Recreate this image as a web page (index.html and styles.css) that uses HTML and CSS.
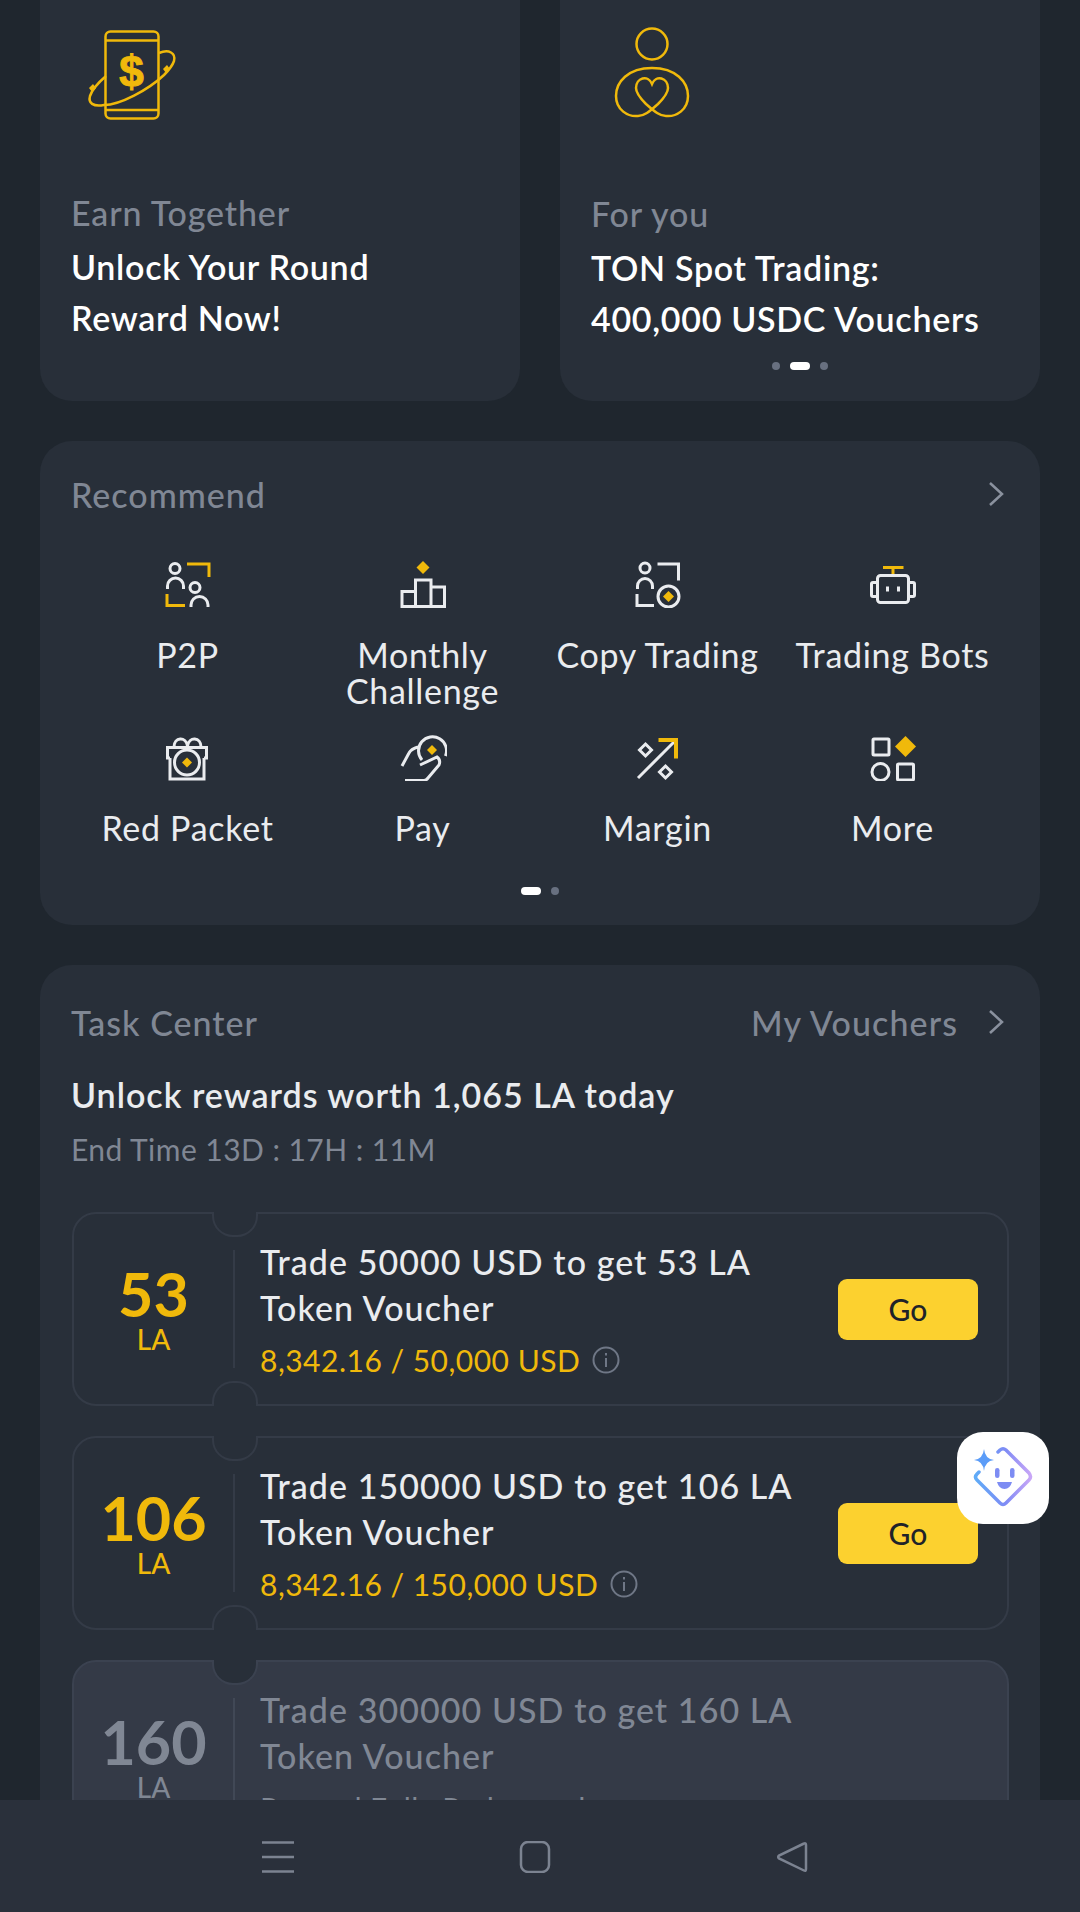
FILE: index.html
```html
<!DOCTYPE html>
<html lang="en">
<head>
<meta charset="utf-8">
<title>Rewards</title>
<link rel="stylesheet" href="styles.css">
</head>
<body>
<div class="screen">
  <main class="scroll">
    <section class="promos">
      <article class="card promo">
        <svg class="promo-icon phone" viewBox="0 0 100 100" width="100" height="100" fill="none" stroke="#f0b90b" stroke-width="2.500">
          <rect x="21.500" y="6.500" width="53" height="87" rx="5"/>
          <path d="M21.500 15.500H74.500M21.500 85H74.500"/>
          <path d="M75 28C85 24 92 28 90 36C88 42 84 46 80 50C64 65 36 80 20 80C9 82 4 78 6 71C8 65 15 57 22 51"/>
          <path d="M83 40l3 4-4 4-3-4zM9 59l3 4-4 4-3-4z" fill="#f0b90b" stroke="none"/>
          <text x="47.500" y="62" class="dollar" text-anchor="middle">$</text>
        </svg>
        <p class="promo-label">Earn Together</p>
        <p class="promo-title">Unlock Your Round<br>Reward Now!</p>
      </article>
      <article class="card promo promo-right">
        <svg class="promo-icon person" viewBox="0 0 84 104" width="84" height="104" fill="none" stroke="#f0b90b" stroke-width="2.500">
          <circle cx="42" cy="24" r="15.500"/>
          <path d="M42 48C66 48 78 62 78 76C78 90 66 97 56 96C50 96 45 92 36 84C30 78 26 72 26 68C26 58 38 54 42 64C46 54 58 58 58 68C58 72 54 78 48 84C39 92 34 96 28 96C18 97 6 90 6 76C6 62 18 48 42 48Z"/>
        </svg>
        <p class="promo-label">For you</p>
        <p class="promo-title">TON Spot Trading:<br>400,000 USDC Vouchers</p>
        <div class="dots promo-dots"><i></i><b></b><i></i></div>
      </article>
    </section>

    <section class="card recommend">
      <header class="head">
        <h2 class="head-title">Recommend</h2>
        <svg class="chev" viewBox="0 0 16 28" width="16" height="28"><path d="M2 3l12 11L2 25"/></svg>
      </header>
      <div class="grid">
        <a class="tile">
          <svg class="ico" viewBox="0 0 48 48"><circle cx="11" cy="8.500" r="5"/><path d="M3.500 29v-3a8 8 0 0 1 16 0v3"/><path class="y" d="M23 4H45V17M3 34V45.500H21"/><circle cx="31" cy="27.500" r="5"/><path d="M27 47v-2a8.500 8.500 0 0 1 17 0v2"/></svg>
          <span>P2P</span>
        </a>
        <a class="tile">
          <svg class="ico" viewBox="0 0 48 48"><path class="yf" d="M24 1l6.500 6.500L24 14l-6.500-6.500z"/><path d="M16.500 31.500H3V46.500H45.500V27H32M16.500 46.500V20H32V46.500"/></svg>
          <span>Monthly<br>Challenge</span>
        </a>
        <a class="tile">
          <svg class="ico" viewBox="0 0 48 48"><circle cx="11" cy="8" r="5"/><path d="M3.500 29v-3a7.500 7.500 0 0 1 15 0v3M23.500 4H44.500V20.500M3 34V45.500H20"/><circle cx="34.500" cy="36.500" r="10.500"/><path class="yf" d="M34.500 31l5.500 5.500-5.500 5.500-5.500-5.500z"/></svg>
          <span>Copy Trading</span>
        </a>
        <a class="tile">
          <svg class="ico" viewBox="0 0 48 48"><path class="y" d="M14 7.500H34.500M24 7.500V14.500"/><rect x="8.500" y="15.500" width="31" height="27" rx="3"/><path d="M8 22.500H4A1.500 1.500 0 0 0 2.500 24V35A1.500 1.500 0 0 0 4 36.500H8M40 22.500H44A1.500 1.500 0 0 1 45.500 24V35A1.500 1.500 0 0 1 44 36.500H40M18.500 26.500V31.500M29.500 26.500V31.500"/></svg>
          <span>Trading Bots</span>
        </a>
        <a class="tile">
          <svg class="ico" viewBox="0 0 48 48"><path d="M6 25H3.500V14.500H42.500V25H40M6 25V46H40V25"/><path d="M10 14C10 4 22 3 23.500 13C25 3 37 4 37 14"/><circle cx="23" cy="29.500" r="12.500"/><path class="yf" d="M23 24.500l5 5-5 5-5-5z"/></svg>
          <span>Red Packet</span>
        </a>
        <a class="tile">
          <svg class="ico" viewBox="0 0 48 48"><path d="M46.500 23A14 14 0 1 0 23 27M3 33L10 20Q12 16 19 14M6 47.500H25Q27 47.500 29 45L40 32Q42 27 38 24L21 32"/><path class="yf" d="M33 12l5 5-5 5-5-5z"/></svg>
          <span>Pay</span>
        </a>
        <a class="tile">
          <svg class="ico" viewBox="0 0 48 48"><path d="M4 45L41 8"/><path class="y wide" d="M24.500 7H42V25.500"/><path d="M11.500 11l6 6-6 6-6-6zM31.500 33l6 6-6 6-6-6z"/></svg>
          <span>Margin</span>
        </a>
        <a class="tile">
          <svg class="ico" viewBox="0 0 48 48"><rect x="4" y="6" width="16" height="16" rx="1"/><path class="yf" d="M36.500 3L47 13.500 36.500 24 26 13.500z"/><circle cx="11.500" cy="39" r="8.500"/><rect x="28.500" y="31" width="16" height="16" rx="1"/></svg>
          <span>More</span>
        </a>
      </div>
      <div class="dots grid-dots"><b></b><i></i></div>
    </section>

    <section class="card tasks">
      <header class="head">
        <h2 class="head-title">Task Center</h2>
        <div class="head-link"><span>My Vouchers</span><svg class="chev" viewBox="0 0 16 28" width="16" height="28"><path d="M2 3l12 11L2 25"/></svg></div>
      </header>
      <p class="tasks-sub">Unlock rewards worth 1,065 LA today</p>
      <p class="tasks-end">End Time 13D : 17H : 11M</p>

      <div class="ticket">
        <div class="amount"><strong>53</strong><span>LA</span></div>
        <div class="detail">
          <h3>Trade 50000 USD to get 53 LA<br>Token Voucher</h3>
          <p class="progress">8,342.16 / 50,000 USD<svg class="info" viewBox="0 0 28 28" width="28" height="28"><circle cx="14" cy="14" r="12.500"/><path d="M14 12V21M14 7V9.500"/></svg></p>
        </div>
        <button class="go">Go</button>
      </div>

      <div class="ticket">
        <div class="amount"><strong>106</strong><span>LA</span></div>
        <div class="detail">
          <h3>Trade 150000 USD to get 106 LA<br>Token Voucher</h3>
          <p class="progress">8,342.16 / 150,000 USD<svg class="info" viewBox="0 0 28 28" width="28" height="28"><circle cx="14" cy="14" r="12.500"/><path d="M14 12V21M14 7V9.500"/></svg></p>
        </div>
        <button class="go">Go</button>
      </div>

      <div class="ticket is-done">
        <div class="amount"><strong>160</strong><span>LA</span></div>
        <div class="detail">
          <h3>Trade 300000 USD to get 160 LA<br>Token Voucher</h3>
          <p class="progress">Reward Fully Redeemed</p>
        </div>
      </div>
    </section>
  </main>

  <nav class="sysnav">
    <svg viewBox="0 0 32 32" width="32" height="32"><path d="M0 1.500H32M0 16H32M0 30.500H32"/></svg>
    <svg viewBox="0 0 32 32" width="32" height="32"><rect x="2" y="1" width="28" height="30" rx="7"/></svg>
    <svg viewBox="0 0 32 32" width="32" height="32"><path d="M28 2.500Q30 1.500 30 4V28Q30 30.500 28 29.500L3 17.500Q1.500 16 3 14.500Z"/></svg>
  </nav>

  <button class="assist" aria-label="Assistant">
    <svg viewBox="3 2 92 92" width="92" height="92">
      <defs><linearGradient id="ag" x1="0" y1="0" x2="1" y2="0"><stop offset="0" stop-color="#5fabf7"/><stop offset=".55" stop-color="#7f8bf5"/><stop offset="1" stop-color="#c8a6f7"/></linearGradient></defs>
      <path d="M44 22L46 20Q49 17.500 52 20L75 43Q78 47 75 50L52 73Q49 76 46 73L23 50Q20 47 23 44L25 42" fill="none" stroke="url(#ag)" stroke-width="3.500" stroke-linecap="round"/>
      <path d="M30 19Q31 29 40 30Q31 31 30 41Q29 31 20 30Q29 29 30 19Z" fill="#5b9cf8"/>
      <rect x="41" y="38" width="4.500" height="10" rx="2.250" fill="#7d8cf3"/>
      <rect x="56" y="38" width="4.500" height="10" rx="2.250" fill="#7d8cf3"/>
      <path d="M43 52H58Q56 59 50.500 59Q45 59 43 52Z" fill="#7d8cf3"/>
    </svg>
  </button>
</div>
</body>
</html>
```

FILE: styles.css
```css
* { box-sizing: border-box; }
html, body { margin: 0; padding: 0; }
body {
  width: 1080px;
  height: 1912px;
  overflow: hidden;
  background: #1f262e;
  font-family: "Lato", "Liberation Sans", sans-serif;
  color: #eaecef;
}
p, h2, h3 { margin: 0; font-weight: 500; }
.screen { position: relative; height: 1912px; display: flex; flex-direction: column; }
.scroll { flex: 1; min-height: 0; overflow: hidden; padding: 0 40px; display: flex; flex-direction: column; gap: 40px; }
.card { background: #282f39; border-radius: 32px; flex: none; }

.promos { display: grid; grid-template-columns: 480px 480px; gap: 40px; margin-top: -40px; flex: none; }
.promo { position: relative; height: 441px; padding: 65px 31px 0; }
.promo-icon { display: block; }
.phone { margin-left: 13px; }
.person { margin: -5px 0 0 19px; }
.dollar { font: 700 44px "Liberation Sans", sans-serif; fill: #f0b90b; stroke: #f0b90b; stroke-width: 1; }
.promo-label { margin-top: 66px; font-size: 34px; letter-spacing: .85px; line-height: 44px; color: #808794; }
.promo-right .promo-label { margin-top: 68px; }
.promo-title { margin-top: 6px; font-size: 34px; letter-spacing: .7px; line-height: 51px; font-weight: 600; color: #fff; }

.dots { display: flex; justify-content: center; align-items: center; gap: 10px; }
.dots i { width: 8px; height: 8px; border-radius: 50%; background: #687080; }
.dots b { width: 20px; height: 8px; border-radius: 4px; background: #fff; }
.promo-dots { position: absolute; left: 0; right: 0; bottom: 31px; }

.recommend { height: 484px; padding: 32px 31px 0; }
.head { display: flex; justify-content: space-between; align-items: center; height: 42px; padding-right: 5px; }
.head-title { font-size: 34px; letter-spacing: 1px; color: #808794; }
.head-link { display: flex; align-items: center; gap: 30px; font-size: 34px; letter-spacing: 1.1px; font-weight: 500; color: #808794; }
.chev { fill: none; stroke: #8a919e; stroke-width: 2.5; flex: none; }
.grid { display: grid; grid-template-columns: repeat(4, 235px); grid-template-rows: 173px 139px; margin: 45px 0 0 -1px; }
.tile { display: flex; flex-direction: column; align-items: center; text-align: center; font-size: 34px; letter-spacing: .7px; line-height: 36px; color: #eaecef; }
.tile span { margin-top: 29px; white-space: nowrap; }
.ico { width: 48px; height: 48px; fill: none; stroke: #eaecef; stroke-width: 3; flex: none; }
.ico .y { stroke: #f0b90b; }
.ico .wide { stroke-width: 4; }
.ico .yf { fill: #f0b90b; stroke: none; }
.grid-dots { margin-top: 15px; }

.tasks { padding: 36px 31px 32px; height: 1000px; }
.tasks-sub { margin-top: 30px; font-size: 34px; letter-spacing: 1px; line-height: 44px; font-weight: 600; color: #eaecef; }
.tasks-end { margin-top: 10px; font-size: 30px; letter-spacing: .45px; line-height: 44px; font-weight: 400; color: #808794; }

.ticket {
  position: relative;
  display: flex;
  align-items: center;
  height: 194px;
  margin-top: 30px;
  margin-left: 1px;
  border: 2px solid #343b47;
  border-radius: 24px;
}
.tasks-end + .ticket { margin-top: 41px; }
.ticket::before, .ticket::after {
  content: "";
  position: absolute;
  left: 138px;
  width: 42px;
  height: 23px;
  background: #282f39;
  border: 2px solid #343b47;
}
.ticket::before { top: -2px; border-top: 0; border-radius: 0 0 21px 21px; }
.ticket::after { bottom: -2px; border-bottom: 0; border-radius: 21px 21px 0 0; }
.amount {
  box-sizing: content-box;
  width: 159px;
  height: 118px;
  flex: none;
  display: flex;
  flex-direction: column;
  align-items: center;
  justify-content: center;
  border-right: 2px solid #343b47;
  color: #f0b90b;
}
.amount strong { font-size: 61px; line-height: 60px; font-weight: 700; }
.amount span { font-size: 28px; line-height: 30px; font-weight: 500; }
.detail { flex: 1; padding: 2px 0 0 25px; min-width: 0; }
.detail h3 { font-size: 34px; letter-spacing: 1.05px; line-height: 46px; font-weight: 500; color: #eaecef; white-space: nowrap; }
.progress { display: flex; align-items: center; gap: 12px; margin-top: 7px; font-size: 30px; letter-spacing: .5px; line-height: 44px; font-weight: 400; color: #f0b90b; white-space: nowrap; }
.info { fill: none; stroke: #6f7786; stroke-width: 2; }
.go {
  flex: none;
  width: 140px;
  height: 61px;
  margin-right: 29px;
  border: 0;
  border-radius: 9px;
  background: #fcd12f;
  font: 500 30px "Lato", "Liberation Sans", sans-serif;
  color: #1f2329;
}
.is-done { background: #343a47; border-color: #3b4250; }
.is-done::before, .is-done::after { border-color: #3b4250; }
.is-done .amount { color: #808794; border-right-color: #414856; }
.is-done .detail h3, .is-done .progress { color: #808794; }

.sysnav {
  position: relative;
  flex: none;
  height: 112px;
  background: #2a303b;
  padding: 2px 10px 0 0;
  display: flex;
  justify-content: center;
  align-items: center;
  gap: 225px;
}
.sysnav svg { fill: none; stroke: #7c8391; stroke-width: 2.5; }

.assist {
  position: absolute;
  right: 31px;
  top: 1432px;
  width: 92px;
  height: 92px;
  padding: 0;
  border: 0;
  border-radius: 26px;
  background: #fff;
}
.assist svg { display: block; }
```
